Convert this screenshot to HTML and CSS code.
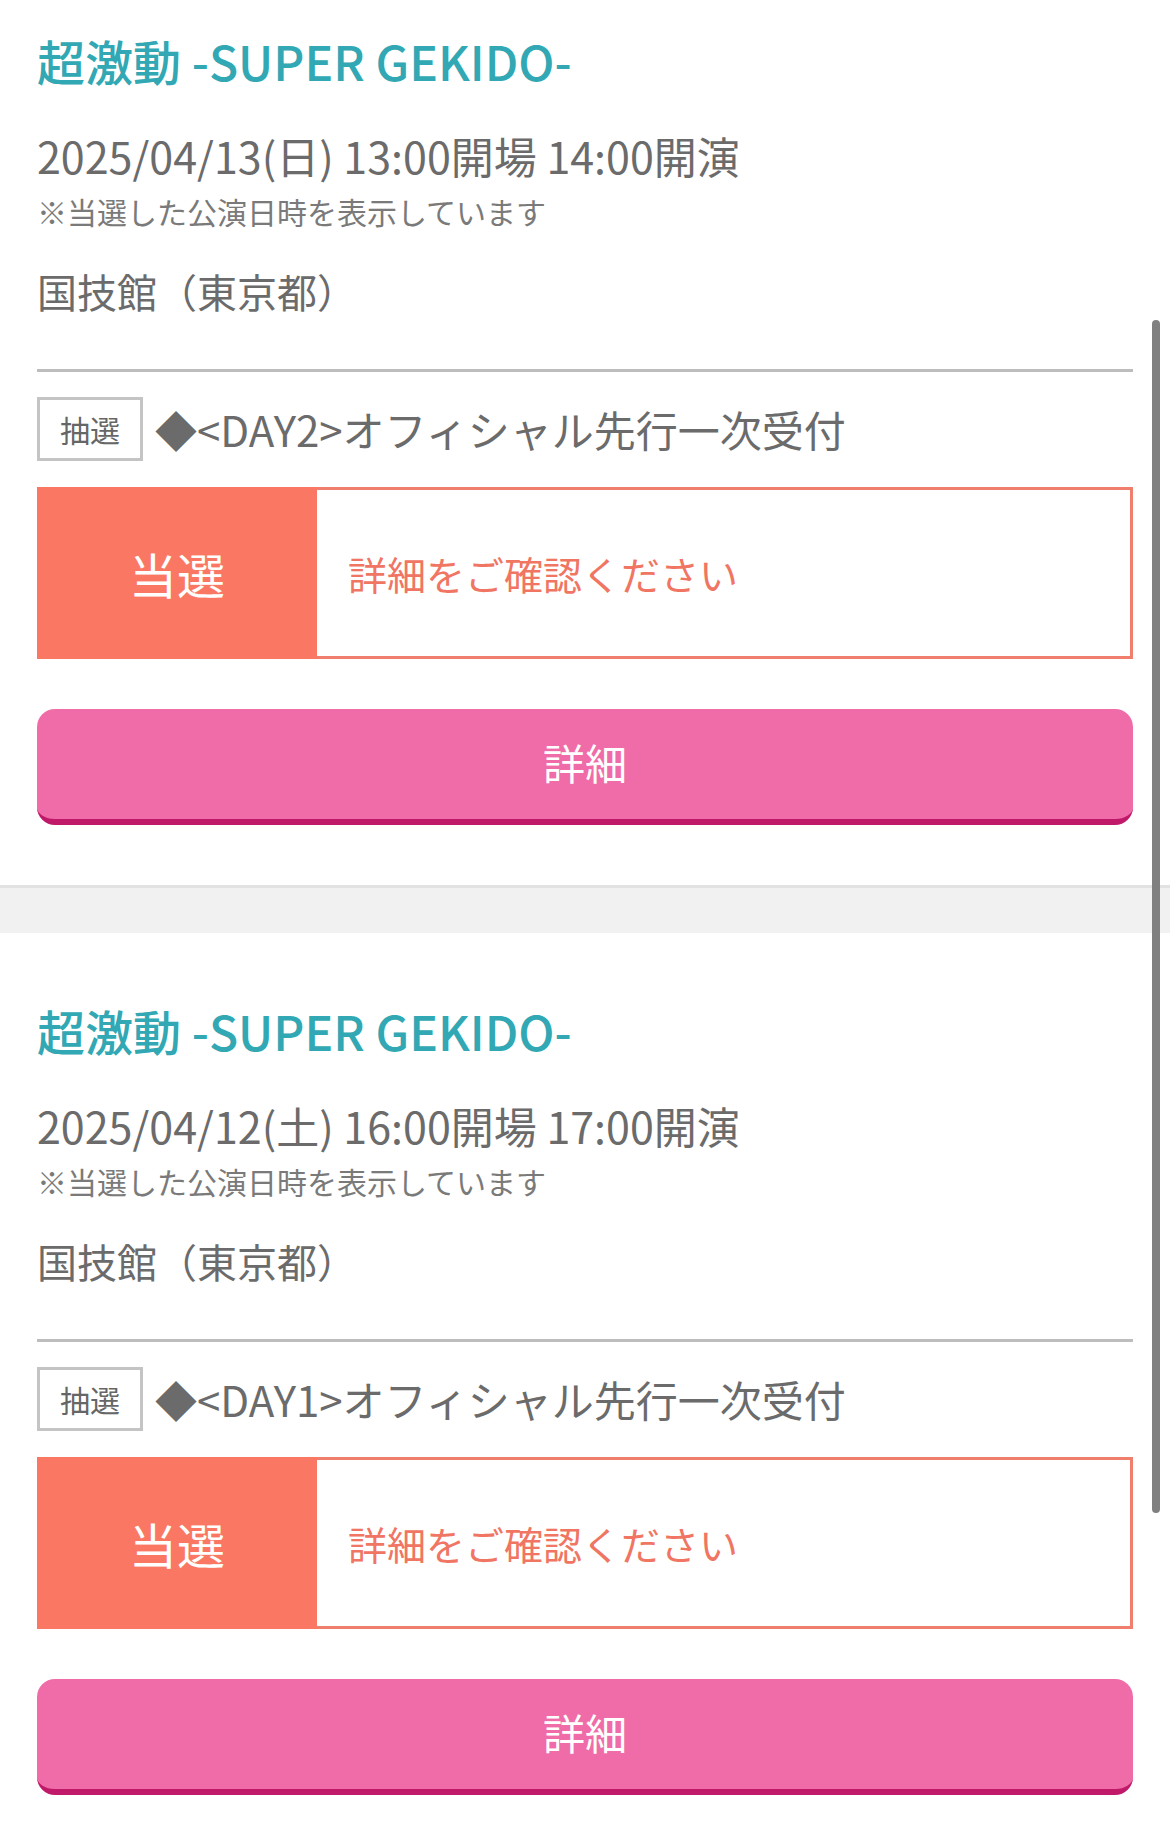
FILE: index.html
```html
<!DOCTYPE html>
<html lang="ja">
<head>
  <meta charset="UTF-8" />
  <meta name="viewport" content="width=device-width, initial-scale=1.0"/>
  <title>申込履歴</title>
  <link rel="stylesheet" href="styles.css">
</head>
<body>
  <div class="list">

    <div class="entry">
      <div class="event">
        <h2 class="event-title">超激動 -SUPER GEKIDO-</h2>
        <div class="event-date">2025/04/13(日) 13:00開場 14:00開演</div>
        <div class="event-note">※当選した公演日時を表示しています</div>
        <div class="event-venue">国技館（東京都）</div>
      </div>
      <div class="apply">
        <span class="tag">抽選</span>
        <span class="apply-name">◆&lt;DAY2&gt;オフィシャル先行一次受付</span>
      </div>
      <div class="result">
        <div class="result-label">当選</div>
        <div class="result-text">詳細をご確認ください</div>
      </div>
      <button type="button" class="btn-detail">詳細</button>
    </div>

    <div class="entry">
      <div class="event">
        <h2 class="event-title">超激動 -SUPER GEKIDO-</h2>
        <div class="event-date">2025/04/12(土) 16:00開場 17:00開演</div>
        <div class="event-note">※当選した公演日時を表示しています</div>
        <div class="event-venue">国技館（東京都）</div>
      </div>
      <div class="apply">
        <span class="tag">抽選</span>
        <span class="apply-name">◆&lt;DAY1&gt;オフィシャル先行一次受付</span>
      </div>
      <div class="result">
        <div class="result-label">当選</div>
        <div class="result-text">詳細をご確認ください</div>
      </div>
      <button type="button" class="btn-detail">詳細</button>
    </div>

  </div>

  <div class="scrollbar"></div>
</body>
</html>
```

FILE: styles.css
```css
body {
  margin: 0;
  font-family: "Noto Sans CJK JP", "Noto Sans", sans-serif;
  background: #fff;
  color: #6e6e6e;
  overflow: hidden;
}
.list { margin-top: -37px; }

.entry {
  padding: 67px 37px 63px;
  border-bottom: 45px solid #f1f1f1;
  position: relative;
}
.entry + .entry { border-bottom: none; }
.entry::after {
  content: "";
  position: absolute;
  left: 0; right: 0; bottom: 0;
  height: 3px;
  background: #e2e2e2;
}
.entry + .entry::after { display: none; }

.event { padding-bottom: 50px; border-bottom: 3px solid #bdbdbd; }
.event-title {
  margin: 0;
  font-size: 48px; line-height: 60px; font-weight: 500;
  color: #31a8b3;
}
.event-date { margin-top: 37px; font-size: 43px; line-height: 56px; color: #6b6b6b; }
.event-note { margin-top: 8px; font-size: 30px; line-height: 40px; color: #7a7a7a; }
.event-venue { margin-top: 32px; font-size: 40px; line-height: 56px; color: #6b6b6b; }

.apply { display: flex; align-items: center; gap: 12px; margin-top: 25px; }
.tag {
  display: flex; align-items: center; justify-content: center;
  box-sizing: border-box;
  width: 106px; height: 64px;
  border: 3px solid #c4c4c4;
  font-size: 30px; color: #666;
}
.apply-name { font-size: 42px; line-height: 56px; color: #6b6b6b; }

.result {
  display: flex;
  margin-top: 26px;
  height: 172px;
  box-sizing: border-box;
  border: 3px solid #f07e6d;
}
.result-label {
  width: 280px;
  margin: -3px 0 -3px -3px;
  background: #fa7863;
  color: #fff;
  font-size: 48px;
  display: flex; align-items: center; justify-content: center;
}
.result-text {
  display: flex; align-items: center;
  padding-left: 31px;
  font-size: 39px; color: #f07562;
}

.btn-detail {
  display: block; width: 100%;
  margin-top: 50px;
  height: 116px;
  border: none;
  border-bottom: 6px solid #c0196a;
  border-radius: 18px;
  background: #f06ca8;
  color: #fff;
  font-family: inherit; font-size: 42px;
  padding: 0 0 6px;
}

.scrollbar {
  position: fixed;
  right: 10px; top: 320px;
  width: 8px; height: 1193px;
  border-radius: 4px;
  background: #808080;
}
```
